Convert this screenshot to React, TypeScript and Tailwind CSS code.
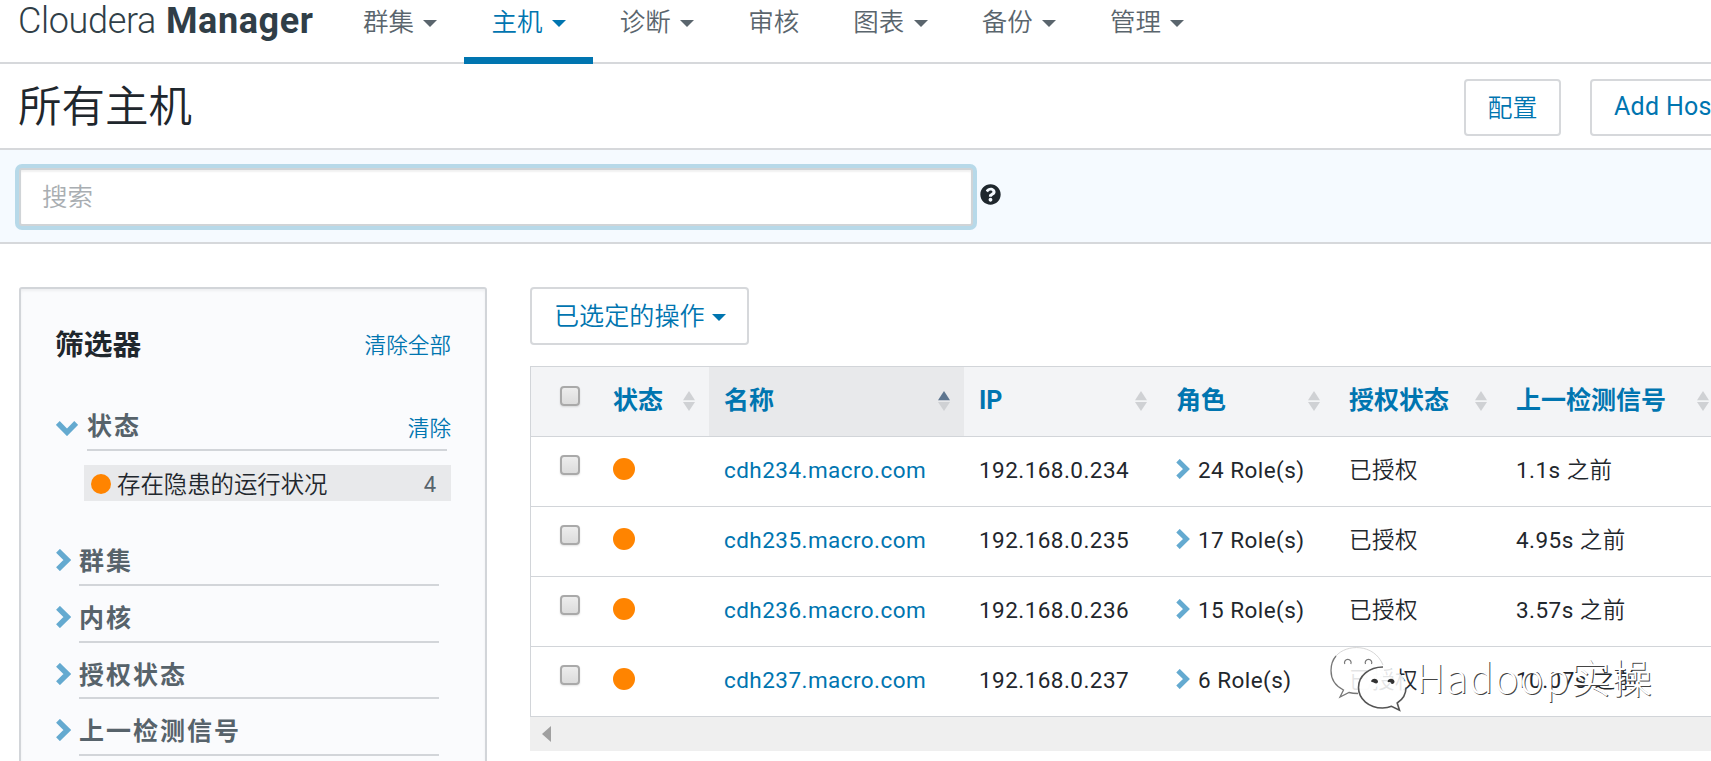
import React from "react";
import { FaQuestionCircle } from "react-icons/fa";

const navItems = [
  { label: "群集", caret: true },
  { label: "主机", caret: true, active: true },
  { label: "诊断", caret: true },
  { label: "审核", caret: false },
  { label: "图表", caret: true },
  { label: "备份", caret: true },
  { label: "管理", caret: true },
];

const columns = [
  { label: "状态", width: "w-[111px]" },
  { label: "名称", width: "w-[255px]", sorted: true },
  { label: "IP", width: "w-[197px]" },
  { label: "角色", width: "w-[173px]" },
  { label: "授权状态", width: "w-[167px]" },
  { label: "上一检测信号", width: "w-[222px]" },
];

const hosts = [
  { name: "cdh234.macro.com", ip: "192.168.0.234", roles: "24 Role(s)", seen: "1.1s" },
  { name: "cdh235.macro.com", ip: "192.168.0.235", roles: "17 Role(s)", seen: "4.95s" },
  { name: "cdh236.macro.com", ip: "192.168.0.236", roles: "15 Role(s)", seen: "3.57s" },
  { name: "cdh237.macro.com", ip: "192.168.0.237", roles: "6 Role(s)", seen: "10.07s" },
];

const filters = ["群集", "内核", "授权状态", "上一检测信号"];

function Caret() {
  return (
    <svg width="14" height="7" viewBox="0 0 14 7" className="shrink-0">
      <path d="M0 0h14L7 7z" fill="currentColor" />
    </svg>
  );
}

function ChevronRight({ small }: { small?: boolean }) {
  return (
    <svg
      width={small ? 14 : 15}
      height={small ? 20 : 22}
      viewBox="0 0 15 22"
      className="shrink-0 text-[#64aad0]"
    >
      <path d="M2 1.8l9.3 9.2L2 20.2" fill="none" stroke="currentColor" strokeWidth="5.4" />
    </svg>
  );
}

function ChevronDown() {
  return (
    <svg width="22" height="15" viewBox="0 0 22 15" className="shrink-0 text-[#64aad0]">
      <path d="M1.8 2l9.2 9.3L20.2 2" fill="none" stroke="currentColor" strokeWidth="5.4" />
    </svg>
  );
}

function SortIcon({ sorted }: { sorted?: boolean }) {
  return (
    <svg width="12" height="20" viewBox="0 0 12 20" className="shrink-0">
      <path d="M0 9.3h12L6 0z" fill={sorted ? "#5d758f" : "#cfd1d4"} />
      <path d="M0 11h12L6 20z" fill="#cfd1d4" />
    </svg>
  );
}

function Checkbox() {
  return (
    <span className="block size-5 shrink-0 rounded-[4px] border-2 border-[#a9a9a9] bg-linear-to-b from-[#ededed] to-[#dcdcdc] shadow-[0_1px_2px_rgba(0,0,0,0.12)]" />
  );
}

function Watermark() {
  return (
    <div className="absolute top-[643px] left-[1329px] flex h-[72px] items-start">
      <svg width="86" height="72" viewBox="0 0 86 72" className="shrink-0">
        <path
          d="M28.5 4C14 4 2 14 2 27.5c0 8.5 4.5 15.5 12.5 19.5L11 54l9-4.5c3 .8 6 1 9 1C43 50.5 55 41 55 27.5S43 4 28.5 4z"
          fill="#fff"
          fillOpacity="0.88"
        />
        <path
          d="M7 13C3.5 17 2 22 2 27.5c0 8.5 4.5 15.5 12.5 19.5L11 54l9-4.5c3 .8 6 1 9 1"
          fill="none"
          stroke="#777"
          strokeWidth="1.3"
        />
        <path d="M7 13C17 1 45 0 54 22" fill="none" stroke="#ccc" strokeWidth="0.8" />
        <path
          d="M15.8 21a3.3 3.3 0 1 1 6 0M36.5 21a3.3 3.3 0 1 1 6 0"
          fill="#fff"
          stroke="#777"
          strokeWidth="1.2"
        />
        <path
          d="M53.5 24C40 24 29.5 33 29.5 44.5S40 65 53.5 65c3.5 0 6.500-.6 9-1.700l8 4-2.300-7.300c5.500-3.500 8.800-9 8.800-15.500C77 33 67 24 53.500 24z"
          fill="#fff"
          fillOpacity="0.88"
        />
        <path
          d="M54 24C40 24 29.500 33 29.500 44.500S40 65 53.500 65c3.500 0 6.500-.6 9-1.700l8 4-2.300-7.300c5.500-3.500 8.800-9 8.800-15.500"
          fill="none"
          stroke="#555"
          strokeWidth="1.6"
        />
        <path
          d="M42 38.5a3.600 3.600 0 0 1 7 0c0 2-2 2.500-3.500 1.500-1-1-2-.5-3.500-1.500zM58.500 38.500a3.600 3.600 0 0 1 7 0c0 2-2 3-3.500 2 1-2-2-.5-3.500-2z"
          fill="#333"
        />
      </svg>
      <span className="mt-[4px] ml-px font-['Noto_Sans_CJK_SC',sans-serif] text-[40px] leading-[58px] font-light tracking-[1.4px] whitespace-nowrap text-white [text-shadow:1px_1px_0.5px_#444]">
        Hadoop实操
      </span>
    </div>
  );
}

export default function App() {
  return (
    <div className="relative flex h-[761px] w-[1711px] flex-col overflow-hidden bg-white font-[Roboto,'Noto_Sans_CJK_SC',sans-serif] text-[#1f272d]">
      <header className="flex h-16 shrink-0 border-b-2 border-[#d6d8db] whitespace-nowrap">
        <div className="flex w-[336px] shrink-0 gap-[10px] pl-[18px] text-[36px] leading-[42px] text-[#303e47]">
          <span className="font-light tracking-[-0.35px]">Cloudera</span>
          <span className="font-bold tracking-[0.6px]">Manager</span>
        </div>
        <nav className="flex h-16">
          {navItems.map((item) => (
            <a
              key={item.label}
              className={
                item.active
                  ? "flex h-16 items-start border-b-[7px] border-[#0075b0] px-[27px] text-[25.5px] leading-[44px] font-[350] text-[#0075b0]"
                  : "flex h-16 items-start px-[27px] text-[25.5px] leading-[44px] font-[350] text-[#5a656d]"
              }
            >
              {item.label}
              {item.caret && (
                <span className="mt-5 ml-[9.4px]">
                  <Caret />
                </span>
              )}
            </a>
          ))}
        </nav>
      </header>

      <section className="flex h-[86px] shrink-0 items-center justify-between border-b-2 border-[#d6d8db] pl-[18px] whitespace-nowrap">
        <h1 className="mt-[3px] text-[43.5px] leading-[60px] font-[350]">所有主机</h1>
        <div className="mt-[2px] flex w-[247px] shrink-0 gap-[29px] overflow-hidden text-[25px] text-[#0075b0]">
          <button className="h-[57px] w-[97px] shrink-0 rounded-[4px] border-2 border-[#d6d8db] pt-[3px] font-[350]">配置</button>
          <button className="h-[57px] w-[160px] shrink-0 rounded-[4px] border-2 border-[#d6d8db] pl-[22px] text-left tracking-[0.3px]">Add Hosts</button>
        </div>
      </section>

      <section className="flex h-[94px] shrink-0 items-start border-b-2 border-[#d6d8db] bg-[#f5faff] pt-[18px] pl-[19px]">
        <div className="flex h-[58px] w-[954px] items-center rounded-[3px] border-2 border-[#d0d4d7] bg-white pt-[1px] pl-[21px] text-[25.5px] font-[350] text-[#a9aeb2] shadow-[0_0_0_4px_#b7d9e9,inset_0_2px_2px_rgba(0,0,0,0.06)]">
          搜索
        </div>
        <FaQuestionCircle size={21} className="mt-[16px] ml-[7px] text-[#1f272d]" />
      </section>

      <main className="flex min-h-0 grow gap-[43px] pt-[43px] pl-[19px]">
        <aside className="h-[500px] w-[468px] shrink-0 rounded-[3px] border-2 border-[#d2d5d9] bg-[#fafbfd] pl-[34px] shadow-[inset_0_2px_3px_rgba(0,0,0,0.05)]">
          <div className="mt-[33px] flex h-[48px] w-[396px] items-center justify-between">
            <h2 className="text-[28.8px] font-bold">筛选器</h2>
            <a className="text-[21.6px] font-[350] text-[#0075b0]">清除全部</a>
          </div>
          <div className="mt-[25px] ml-[1px] flex h-[56px] w-[395px]">
            <span className="mt-[26px] w-[31px]">
              <ChevronDown />
            </span>
            <div className="flex w-[360px] justify-between border-b-2 border-[#d2d5d9]">
              <h3 className="mt-[15px] text-[25px] leading-[34px] font-bold tracking-[2px] text-[#57636b]">状态</h3>
              <a className="mt-[17px] -mr-1 text-[21.6px] leading-[34px] font-[350] text-[#0075b0]">清除</a>
            </div>
          </div>
          <div className="mt-[14px] ml-[29px] flex h-9 w-[367px] items-center bg-[#e8e9eb] pl-[7px]">
            <span className="mt-[1px] size-5 rounded-full bg-[#ff8400]" />
            <span className="mt-[4px] ml-[6px] text-[23.4px] leading-9 font-[350]">存在隐患的运行状况</span>
            <span className="mt-[3px] mr-[15px] ml-auto text-[22px] text-[#57636b]">4</span>
          </div>
          <ul className="mt-[28.4px] ml-[1px]">
            {filters.map((label) => (
              <li key={label} className="flex h-[56.7px]">
                <span className="mt-[20px] w-[23px]">
                  <ChevronRight />
                </span>
                <span className="w-[360px] border-b-2 border-[#d2d5d9] pt-[16px] text-[25px] leading-[34px] font-bold tracking-[2px] text-[#57636b]">{label}</span>
              </li>
            ))}
          </ul>
        </aside>

        <div className="flex min-w-0 grow flex-col overflow-hidden whitespace-nowrap">
          <button className="flex h-[58px] w-[219px] shrink-0 items-center rounded-[4px] border-2 border-[#d6d8db] pl-[22px] text-[25.1px] font-[350] text-[#0075b0]">
            <span className="pt-[2px]">已选定的操作</span>
            <span className="mt-[3px] ml-[7px]">
              <Caret />
            </span>
          </button>
          <div className="mt-[21px] w-[1220px] shrink-0 border-t border-l border-[#d2d5d9]">
            <div className="flex h-[70px] border-b border-[#d2d5d9] bg-[#f3f4f6]">
              <div className="w-[67px] shrink-0 pt-[19px] pl-[29px]">
                <Checkbox />
              </div>
              {columns.map((c) => (
                <div
                  key={c.label}
                  className={`flex shrink-0 items-center justify-between pr-[14px] pb-[2px] pl-[15px] text-[25px] font-bold text-[#0075b0] ${c.width} ${c.sorted ? "bg-[#e8e9eb]" : ""}`}
                >
                  {c.label}
                  <SortIcon sorted={c.sorted} />
                </div>
              ))}
            </div>
            {hosts.map((h) => (
              <div key={h.name} className="flex h-[70px] border-b border-[#d2d5d9] text-[22.5px] leading-[66px] tracking-[0.45px]">
                <div className="w-[67px] shrink-0 pt-[18px] pl-[29px]">
                  <Checkbox />
                </div>
                <div className="w-[111px] shrink-0 pt-[21px] pl-[14.5px]">
                  <span className="block size-[22px] rounded-full bg-[#ff8400]" />
                </div>
                <div className="w-[255px] shrink-0 pl-[15px] text-[#0075b0]">{h.name}</div>
                <div className="w-[197px] shrink-0 pl-[15px]">{h.ip}</div>
                <div className="flex w-[173px] shrink-0 pl-[15px]">
                  <span className="mt-[22px] w-[22px]">
                    <ChevronRight small />
                  </span>
                  {h.roles}
                </div>
                <div className="w-[167px] shrink-0 pl-[15px] font-[350]">已授权</div>
                <div className="w-[222px] shrink-0 pl-[15px]">
                  {h.seen} <span className="font-[350]">之前</span>
                </div>
              </div>
            ))}
          </div>
          <div className="flex h-[34px] shrink-0 items-center bg-[#efefef] pl-3">
            <svg width="9" height="16" viewBox="0 0 9 16">
              <path d="M9 0v16L0 8z" fill="#a0a0a0" />
            </svg>
          </div>
        </div>
      </main>
      <Watermark />
    </div>
  );
}
